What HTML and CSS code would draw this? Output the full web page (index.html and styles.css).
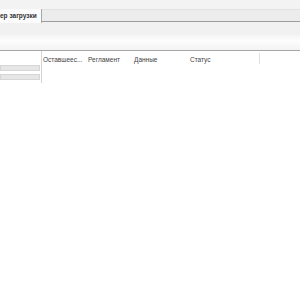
FILE: index.html
```html
<!DOCTYPE html>
<html lang="ru">
<head>
    <meta charset="UTF-8">
    <title>Менеджер загрузки</title>
    <link rel="stylesheet" href="styles.css">
</head>
<body>
    <div class="window">
        <div class="top"></div>
        <div class="tabs">
            <div class="tab">ер загрузки</div>
        </div>
        <div class="toolbar"></div>
        <div class="band"></div>
        <div class="main">
            <div class="side">
                <div class="side-head"></div>
                <div class="bar"></div>
                <div class="bar"></div>
            </div>
            <div class="list">
                <div class="head">
                    <div class="col c1">Оставшеес...</div>
                    <div class="col c2">Регламент</div>
                    <div class="col c3">Данные</div>
                    <div class="col c4">Статус</div>
                    <div class="col c5"></div>
                </div>
            </div>
        </div>
    </div>
</body>
</html>
```
FILE: styles.css
```css
*{
    margin: 0;
    padding: 0;
    box-sizing: border-box;
}
body{
    width: 300px;
    height: 300px;
    background-color: white;
    font-family: "Liberation Sans", Arial, sans-serif;
    font-size: 6.5px;
    color: #444;
    overflow: hidden;
}
.top{
    height: 10px;
    background-color: #f3f3f3;
    border-bottom: 1px solid #e2e2e2;
}
.tabs{
    height: 12px;
    background-color: #ececec;
    border-bottom: 1px solid #9c9c9c;
    display: flex;
}
.tab{
    width: 42px;
    background-color: #fbfbfb;
    border-right: 1px solid #a8a8a8;
    font-weight: bold;
    color: #333;
    white-space: nowrap;
    overflow: hidden;
    margin-top: -1px;
    height: 14px;
    line-height: 14px;
}
.toolbar{
    height: 13px;
    background-color: #f1f1f1;
}
.band{
    height: 16px;
    background: linear-gradient(#f4f4f4, #fdfdfd 40%, #f3f3f3);
    border-bottom: 1px solid #a6a6a6;
}
.main{
    display: flex;
}
.side{
    width: 42px;
    border-right: 1px solid #d4d4d4;
    height: 32px;
}
.side-head{
    height: 14px;
}
.bar{
    height: 6px;
    margin: 0 1px 3px 0;
    background-color: #e6e6e6;
    border: 1px solid #d6d6d6;
}
.list{
    flex: 1;
}
.head{
    display: flex;
    height: 13px;
    padding-top: 2px;
    line-height: 13px;
}
.col{
    padding-left: 1px;
    white-space: nowrap;
}
.c1{ width: 45px; }
.c2{ width: 46px; }
.c3{ width: 56px; }
.c4{ width: 71px; border-right: 1px solid #e0e0e0; }
```
